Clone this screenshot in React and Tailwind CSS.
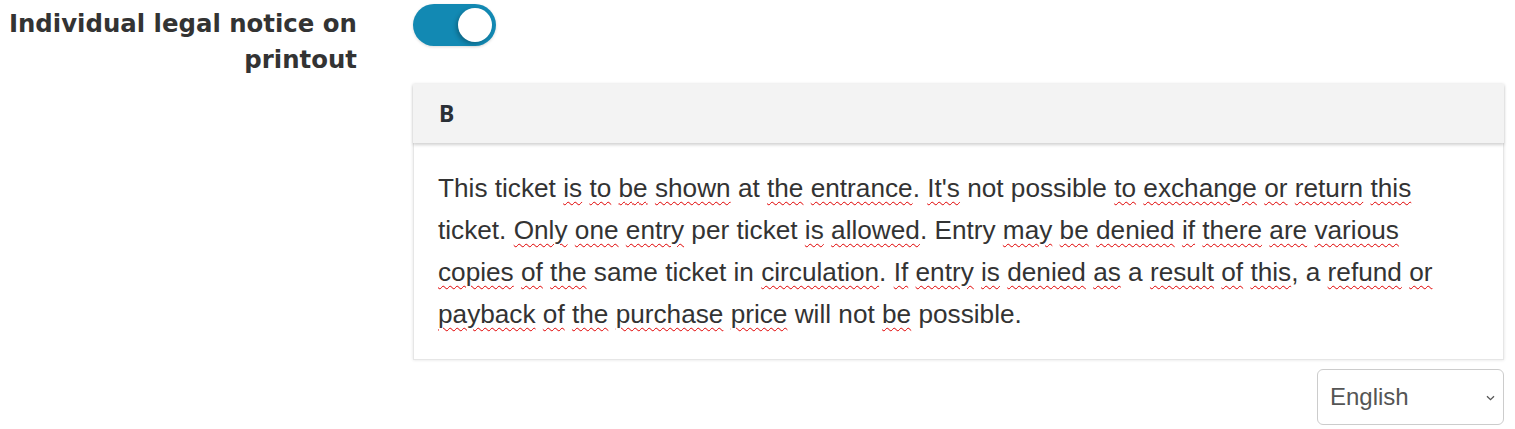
import React from "react";

const lines = [
  [["This", 0], ["ticket", 0], ["is", 1], ["to", 1], ["be", 1], ["shown", 1], ["at", 0], ["the", 1], ["entrance", 1, "."], ["It's", 1], ["not", 0], ["possible", 0], ["to", 1], ["exchange", 1], ["or", 1], ["return", 1], ["this", 1]],
  [["ticket.", 0], ["Only", 1], ["one", 1], ["entry", 1], ["per", 0], ["ticket", 0], ["is", 1], ["allowed", 1, "."], ["Entry", 0], ["may", 1], ["be", 1], ["denied", 1], ["if", 1], ["there", 1], ["are", 1], ["various", 1]],
  [["copies", 1], ["of", 1], ["the", 1], ["same", 0], ["ticket", 0], ["in", 0], ["circulation", 1, "."], ["If", 1], ["entry", 1], ["is", 1], ["denied", 1], ["as", 1], ["a", 0], ["result", 1], ["of", 1], ["this", 1, ","], ["a", 0], ["refund", 1], ["or", 1]],
  [["payback", 1], ["of", 1], ["the", 1], ["purchase", 1], ["price", 1], ["will", 0], ["not", 0], ["be", 1], ["possible.", 0]],
];

function Word({ w }) {
  const [text, sp, punct] = w;
  return (
    <>
      {sp ? (
        <span className="underline decoration-wavy decoration-[#e00000] decoration-1 underline-offset-[4px]">{text}</span>
      ) : (
        <span>{text}</span>
      )}
      {punct || ""}
    </>
  );
}

export default function App() {
  return (
    <div className="w-[1515px] h-[429px] bg-white flex">
      <div className="w-[357px] pt-[6px] text-right text-[24.4px] leading-[36px] font-bold text-[#333]" style={{ fontFamily: '"DejaVu Sans", sans-serif' }}>
        Individual legal notice on
        <br />
        printout
      </div>
      <div className="flex-1 ml-[56px] mr-[11px] pt-[4px] flex flex-col">
        <div className="w-[83px] h-[42px] rounded-full bg-[#1289b3] relative shadow-[0_1px_3px_rgba(0,0,0,0.15)]">
          <div className="absolute right-[4px] top-[4px] w-[34px] h-[34px] rounded-full bg-white shadow-[-2px_2px_4px_rgba(0,0,0,0.25)]" />
        </div>
        <div className="mt-[38px] shadow-[0_0_3px_rgba(0,0,0,0.12)]">
          <div className="h-[59px] bg-[#f3f3f3] flex items-center pl-[26px] shadow-[0_2px_3px_rgba(0,0,0,0.18)] relative z-10">
            <span className="text-[23px] font-bold text-[#2a2f36]" style={{ fontFamily: '"Noto Sans", sans-serif' }}>B</span>
          </div>
          <div className="bg-white border border-t-0 border-[#e6e6e6] pl-[24px] pr-[10px] pt-[24px] pb-[24px] text-[26.2px] leading-[42px] text-[#333]" style={{ fontFamily: '"Liberation Sans", Arial, sans-serif' }}>
            {lines.map((ln, i) => (
              <div key={i} className="whitespace-nowrap">
                {ln.map((w, j) => (
                  <React.Fragment key={j}>
                    {j > 0 ? " " : ""}
                    <Word w={w} />
                  </React.Fragment>
                ))}
              </div>
            ))}
          </div>
        </div>
        <div className="flex justify-end mt-[9px]">
          <div className="w-[187px] h-[56px] border border-[#ccc] rounded-[6px] flex items-center justify-between pl-[12px] pr-[8px] text-[24px] text-[#555]" style={{ fontFamily: '"Liberation Sans", Arial, sans-serif' }}>
            <span>English</span>
            <svg width="9" height="6" viewBox="0 0 9 6" className="mt-[1px]">
              <path d="M1 1.2 L4.5 4.6 L8 1.2" fill="none" stroke="#555" strokeWidth="1.3" />
            </svg>
          </div>
        </div>
      </div>
    </div>
  );
}
